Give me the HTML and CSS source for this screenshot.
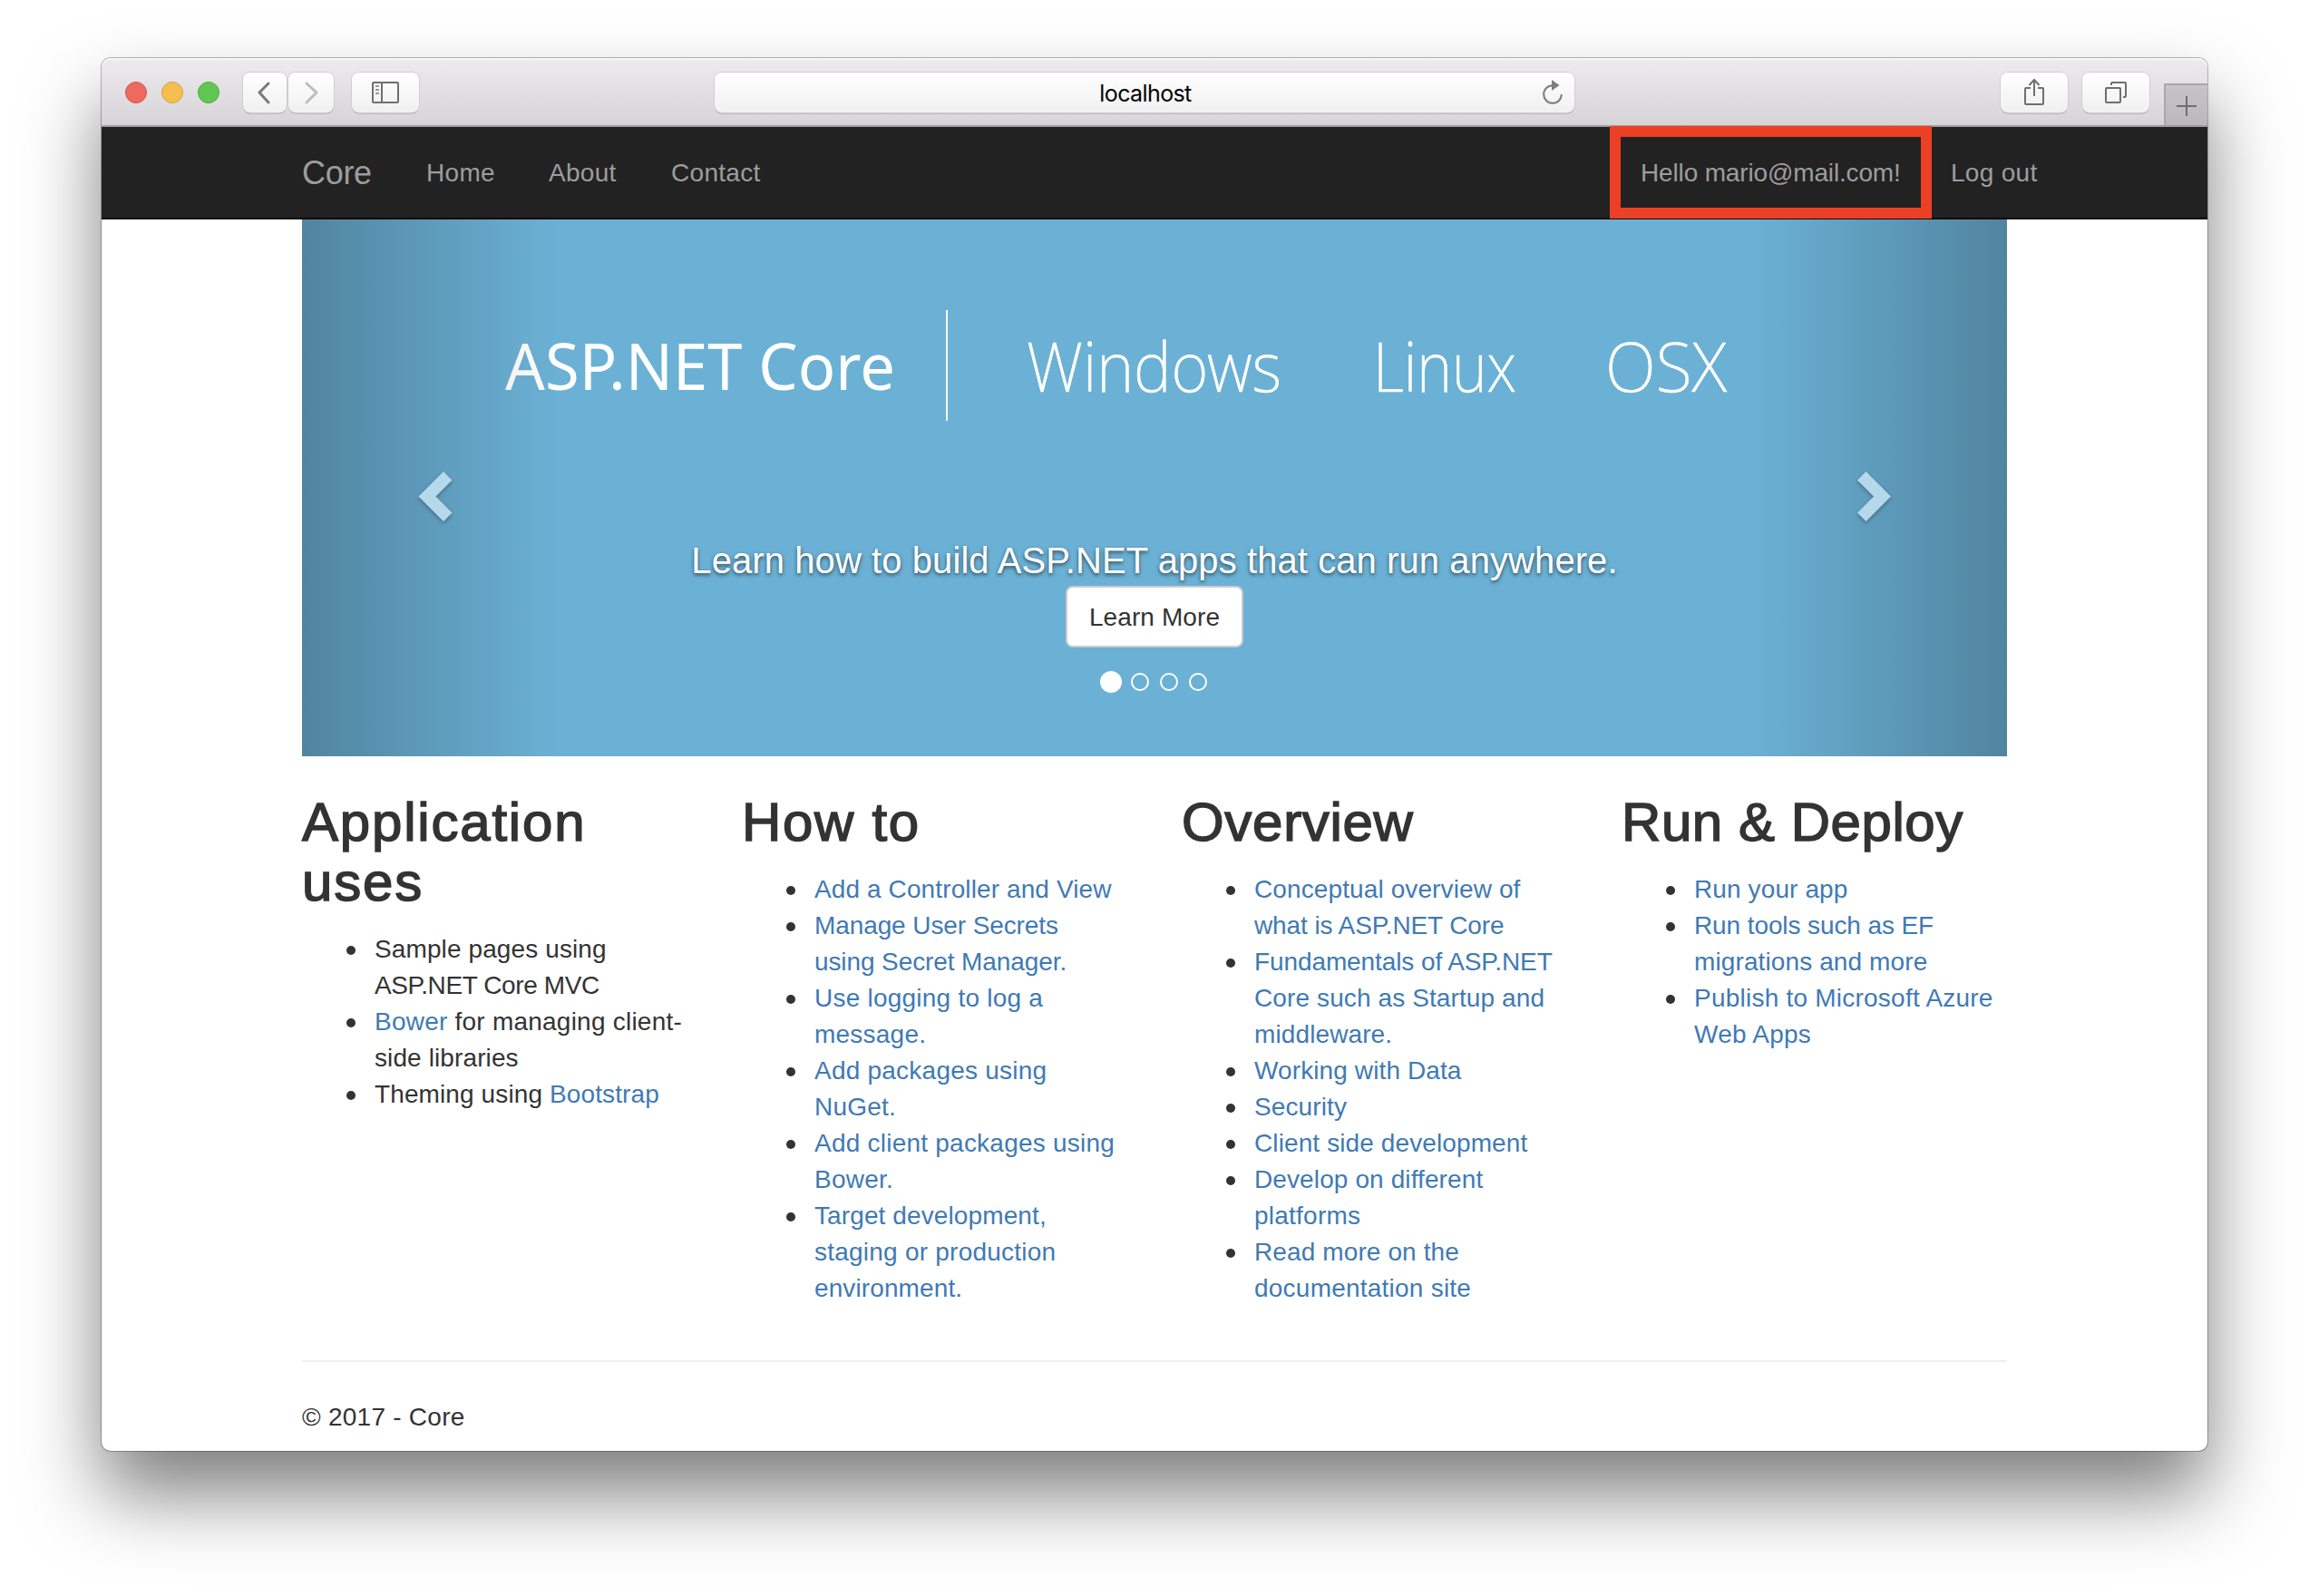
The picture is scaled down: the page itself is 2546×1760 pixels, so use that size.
FILE: index.html
```html
<!DOCTYPE html>
<html lang="en">
<head>
<meta charset="utf-8">
<title>Home Page - Core</title>
<link rel="stylesheet" href="styles.css">
</head>
<body>
<div class="window">
  <header class="toolbar">
    <div class="lights"><i class="light red"></i><i class="light yellow"></i><i class="light green"></i></div>
    <div class="history">
      <button class="tool back"><svg width="48" height="44" viewBox="0 0 48 44"><path d="M28 12 18 22l10 11" fill="none" stroke="#7a7a7a" stroke-width="3" stroke-linecap="round" stroke-linejoin="round"/></svg></button>
      <button class="tool forward"><svg width="50" height="44" viewBox="0 0 50 44"><path d="M20 12 31 22 20 33" fill="none" stroke="#bdbdbd" stroke-width="3" stroke-linecap="round" stroke-linejoin="round"/></svg></button>
    </div>
    <button class="tool sidebar"><svg width="74" height="44" viewBox="0 0 74 44"><g fill="none" stroke="#6f6f6f" stroke-width="2"><rect x="23" y="11" width="28" height="22" rx="1"/><path d="M33 11v22"/><path d="M26 15h4M26 19h4M26 23h4" stroke="#999"/></g></svg></button>
    <div class="address"><span class="host">localhost</span>
      <svg class="reload" width="24" height="28" viewBox="0 0 24 28"><path d="M12 6.2A9.8 9.8 0 1 0 21.8 16" fill="none" stroke="#7d7d7d" stroke-width="2"/><path d="M11 0v12l8.500-6z" fill="#7d7d7d"/></svg>
    </div>
    <button class="tool share"><svg width="74" height="44" viewBox="0 0 74 44"><g fill="none" stroke="#6f6f6f" stroke-width="2"><path d="M33 17H28a1 1 0 0 0-1 1V34a1 1 0 0 0 1 1H46a1 1 0 0 0 1-1V18a1 1 0 0 0-1-1H41"/><path d="M37 26V8M31.500 14 37 8l5.500 6"/></g></svg></button>
    <button class="tool tabs"><svg width="74" height="44" viewBox="0 0 74 44"><g fill="none" stroke="#6f6f6f" stroke-width="2"><rect x="26" y="17" width="16" height="16" rx="1"/><path d="M32 14V12a1 1 0 0 1 1-1H47a1 1 0 0 1 1 1V26a1 1 0 0 1-1 1H45"/></g></svg></button>
    <button class="new-tab"><svg width="46" height="44" viewBox="0 0 46 44"><path d="M12 23H34M23 12V34" stroke="#6f6d70" stroke-width="2"/></svg></button>
  </header>

  <nav class="navbar">
    <a class="brand">Core</a>
    <a class="home">Home</a>
    <a class="about">About</a>
    <a class="contact">Contact</a>
    <a class="hello">Hello mario@mail.com!</a>
    <a class="logout">Log out</a>
  </nav>

  <main class="container">
    <section class="carousel">
      <svg class="banner" width="1880" height="240" viewBox="333 242 1880 240" fill="#fff">
        <text class="banner-main" x="557" y="430" textLength="430" lengthAdjust="spacingAndGlyphs">ASP.NET Core</text>
        <rect x="1043" y="342" width="2" height="122"/>
        <text class="banner-light" x="1132" y="432" textLength="281" lengthAdjust="spacingAndGlyphs">Windows</text>
        <text class="banner-light" x="1514" y="432" textLength="158" lengthAdjust="spacingAndGlyphs">Linux</text>
        <text class="banner-light" x="1770" y="432" textLength="134" lengthAdjust="spacingAndGlyphs">OSX</text>
      </svg>
      <div class="caption">
        <p class="lead">Learn how to build ASP.NET apps that can run anywhere.</p>
        <button class="learn">Learn More</button>
        <div class="dots"><i class="dot active"></i><i class="dot"></i><i class="dot"></i><i class="dot"></i></div>
      </div>
      <div class="edge left"><svg class="chevron" width="38" height="56" viewBox="0 0 38 56"><path d="M28 0 .5 27.500 28 55l9.500-9.500-18-18 18-18z"/></svg></div>
      <div class="edge right"><svg class="chevron" width="38" height="56" viewBox="0 0 38 56"><path d="M9.500 0 37 27.500 9.500 55 0 45.500l18-18L0 9.500z"/></svg></div>
    </section>

    <section class="row">
      <div class="col uses">
        <h2>Application<br>uses</h2>
        <ul>
          <li>Sample pages using<br><span class="tight">ASP.NET Core MVC</span></li>
          <li><span class="loose"><a>Bower</a> for managing client-</span><br>side libraries</li>
          <li>Theming using <a>Bootstrap</a></li>
        </ul>
      </div>
      <div class="col howto">
        <h2>How to</h2>
        <ul>
          <li><a>Add a Controller and View</a></li>
          <li><a class="snug">Manage User Secrets<br>using Secret Manager.</a></li>
          <li><a class="loose">Use logging to log a<br>message.</a></li>
          <li><a class="loose">Add packages using<br>NuGet.</a></li>
          <li><a class="loose">Add client packages using<br>Bower.</a></li>
          <li><a>Target development,<br><span class="loose">staging or production</span><br>environment.</a></li>
        </ul>
      </div>
      <div class="col overview">
        <h2>Overview</h2>
        <ul>
          <li><a>Conceptual overview of<br><span class="snug">what is ASP.NET Core</span></a></li>
          <li><a><span class="snug">Fundamentals of ASP.NET</span><br>Core such as Startup and<br>middleware.</a></li>
          <li><a>Working with Data</a></li>
          <li><a>Security</a></li>
          <li><a>Client side development</a></li>
          <li><a>Develop on different<br><span class="loose">platforms</span></a></li>
          <li><a>Read more on the<br><span class="loose">documentation site</span></a></li>
        </ul>
      </div>
      <div class="col deploy">
        <h2>Run &amp; Deploy</h2>
        <ul>
          <li><a>Run your app</a></li>
          <li><a><span class="snug">Run tools such as EF</span><br>migrations and more</a></li>
          <li><a class="loose">Publish to Microsoft Azure<br>Web Apps</a></li>
        </ul>
      </div>
    </section>
    <hr>
    <footer>© 2017 - Core</footer>
  </main>
</div>
</body>
</html>
```
FILE: styles.css
```css
*, *::before, *::after { box-sizing: border-box; }
html { background: #fff; }
body {
  margin: 0;
  width: 2546px;
  height: 1760px;
  padding: 64px 112px 0;
  overflow: hidden;
  font: 28px/40px "Liberation Sans", Arial, sans-serif;
  color: #333;
}
.window {
  width: 2322px;
  height: 1536px;
  border-radius: 10px;
  background: #fff;
  box-shadow: 0 0 0 1px rgba(0, 0, 0, .27), 0 48px 84px rgba(0, 0, 0, .5);
}
button { font: inherit; padding: 0; margin: 0; border: 0; }
svg { display: block; }

/* browser toolbar */
.toolbar {
  display: flex;
  align-items: flex-start;
  height: 76px;
  padding: 16px 0 0 26px;
  border-radius: 10px 10px 0 0;
  border-bottom: 2px solid #a09ea1;
  background: linear-gradient(#edebee, #d6d4d7);
  box-shadow: inset 0 2px 0 #f6f5f6;
}
.lights { display: flex; gap: 16px; padding-top: 10px; width: 130px; }
.light { width: 24px; height: 24px; border-radius: 50%; border: 1px solid; }
.red { background: #ee6a5f; border-color: #d3544b; }
.yellow { background: #f6be50; border-color: #d9a03c; }
.green { background: #62c655; border-color: #50a73f; }
.history { display: flex; gap: 2px; margin-right: 20px; }
.tool, .address {
  height: 44px;
  border-radius: 8px;
  background: linear-gradient(#fff, #f0f0f0);
  box-shadow: 0 0 0 1px #cfcdd0, 0 1.500px 0 #a3a1a4;
}
.back { width: 48px; }
.forward { width: 50px; }
.sidebar { width: 74px; margin-right: 326px; }
.address {
  position: relative;
  width: 948px;
  margin-right: 470px;
  padding: 1px 0 0 2px;
  text-align: center;
  font: 25px/44px Inter, sans-serif;
  color: #000;
}
.host { letter-spacing: -.6px; }
.reload { position: absolute; right: 12px; top: 8px; }
.share { width: 74px; margin-right: 16px; }
.tabs { width: 74px; margin-right: 16px; }
.new-tab {
  width: 48px;
  height: 46px;
  margin-top: 12px;
  border: solid #a9a7aa;
  border-width: 2px 0 0 2px;
  background: linear-gradient(#c6c4c7, #bab8bb);
}

/* site navigation */
.navbar {
  display: flex;
  height: 102px;
  padding-left: 221px;
  border-bottom: 2px solid #090909;
  background: #222;
  line-height: 102px;
  letter-spacing: .3px;
  white-space: nowrap;
}
.navbar a { color: #9d9d9d; flex: none; }
.brand { font-size: 36px; width: 137px; line-height: 101px; letter-spacing: -.3px; }
.home { width: 135px; }
.about { width: 135px; }
.contact { width: 1069px; }
.hello { position: relative; z-index: 1; width: 342px; letter-spacing: -.15px; }
.hello::after {
  content: "";
  position: absolute;
  left: -34px;
  top: -1px;
  width: 355px;
  height: 102px;
  border: 12px solid #ec4024;
}

/* carousel */
.container { width: 1880px; margin-left: 221px; }
.carousel { position: relative; height: 592px; background: #6bb1d5; }
.banner { height: 240px; }
.banner-main { font: 400 71px "Noto Sans", sans-serif; }
.banner-light { font: 200 75px "Noto Sans", sans-serif; stroke: #fff; stroke-width: .6px; }
.caption {
  display: flex;
  flex-direction: column;
  align-items: center;
  height: 352px;
  padding-top: 108px;
}
.lead {
  margin: 0;
  font-size: 40px;
  line-height: 56px;
  letter-spacing: .08px;
  color: #fff;
  white-space: nowrap;
  text-shadow: 0 2px 4px rgba(0, 0, 0, .6);
}
.learn {
  width: 196px;
  height: 68px;
  padding-top: 1px;
  border: 2px solid #ccc;
  border-radius: 8px;
  background: #fff;
  color: #333;
  letter-spacing: .1px;
}
.dots { display: flex; align-items: center; gap: 12px; height: 24px; margin: 26px 2px 0 0; }
.dot { width: 20px; height: 20px; border: 2px solid #fff; border-radius: 50%; }
.active { width: 24px; height: 24px; background: #fff; margin-right: -2px; }
.edge {
  position: absolute;
  top: 0;
  width: 282px;
  height: 592px;
  padding-top: 278px;
}
.left { left: 0; padding-left: 128px; background: linear-gradient(90deg, rgba(0, 0, 0, .25), transparent); }
.right { right: 0; padding-left: 117px; background: linear-gradient(270deg, rgba(0, 0, 0, .25), transparent); }
.chevron { fill: #b5d9ea; overflow: visible; filter: drop-shadow(0 2px 2px rgba(0, 0, 0, .3)); }

/* link columns */
.row {
  display: grid;
  grid-template-columns: repeat(4, 485px);
  height: 626px;
  padding-top: 40px;
  white-space: nowrap;
}
h2 {
  margin: 0 0 21px;
  font-size: 60px;
  line-height: 66px;
  font-weight: 400;
  -webkit-text-stroke: 1.500px #333;
}
.uses h2 { letter-spacing: 1.800px; }
.howto h2 { letter-spacing: 1.700px; }
.overview h2 { letter-spacing: .7px; }
.deploy h2 { letter-spacing: .55px; }
ul { margin: 0; padding-left: 80px; list-style: none; letter-spacing: .11px; }
li::before {
  content: "";
  display: inline-block;
  width: 10px;
  height: 10px;
  margin: 0 21px 0 -31px;
  border-radius: 50%;
  background: #333;
  vertical-align: 3px;
}
.tight { letter-spacing: -.4px; }
.snug { letter-spacing: -.1px; }
.loose { letter-spacing: .23px; }
a { color: #3f7ab5; }
hr { margin: 40px 0; border: 0; height: 2px; background: #eee; }
footer { padding-top: 1px; letter-spacing: .25px; white-space: nowrap; }
```
